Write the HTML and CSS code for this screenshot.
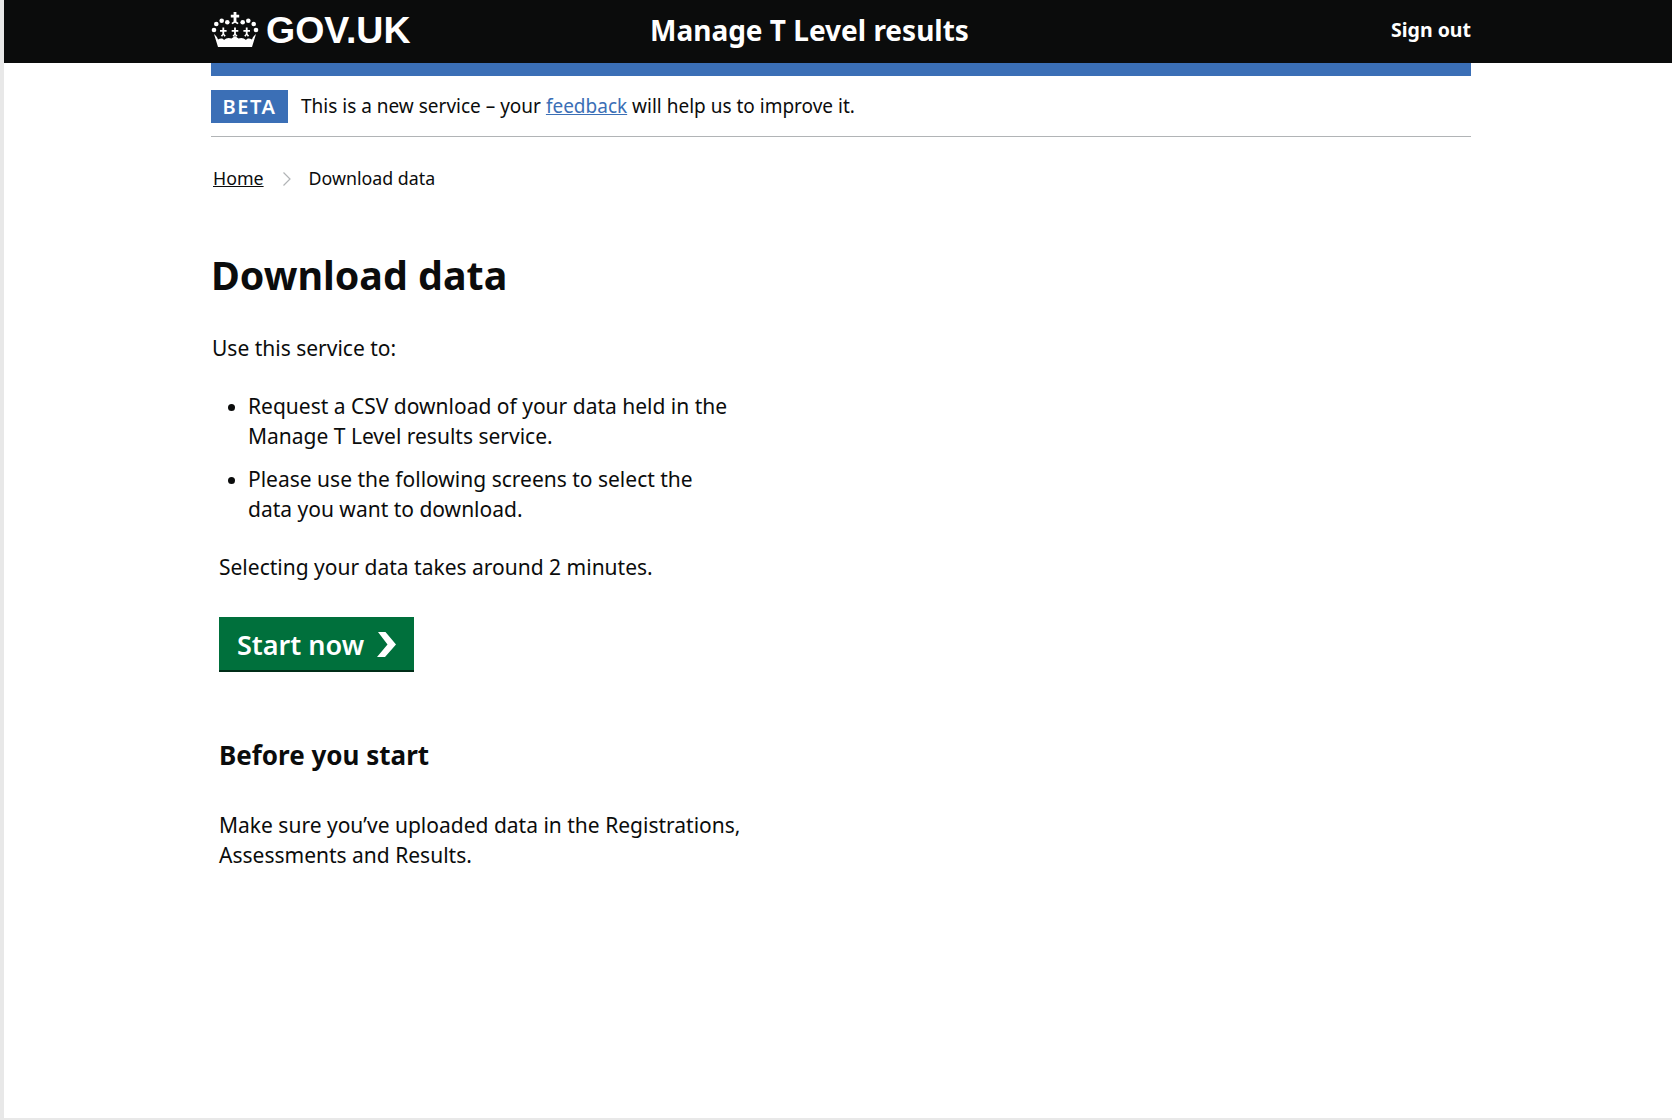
FILE: index.html
```html
<!DOCTYPE html>
<html lang="en">
<head>
    <meta charset="UTF-8">
    <meta name="viewport" content="width=device-width, initial-scale=1.0">
    <title>Download data - Manage T Level results</title>
    <link rel="stylesheet" href="styles.css">
</head>
<body>
    <div class="page">
        <header class="site-header">
            <div class="header-inner">
                <a class="logo" href="#">
                    <svg class="crown" viewBox="0 0 48 36" width="48" height="36" fill="#fff">
                        <path d="M22.600 0h2.800v2.800h2.800v2.800h-2.800v3.800l2.200 1.600-1 1.200-2.600-1.400-2.600 1.400-1-1.200 2.200-1.600V5.600h-2.800V2.800h2.800z"/>
                        <circle cx="3" cy="18" r="2.300"/>
                        <circle cx="5.300" cy="12" r="2.300"/>
                        <circle cx="10.700" cy="8.700" r="2.300"/>
                        <circle cx="16.300" cy="10.300" r="2.300"/>
                        <circle cx="31.700" cy="10.300" r="2.300"/>
                        <circle cx="37.300" cy="8.700" r="2.300"/>
                        <circle cx="42.700" cy="12" r="2.300"/>
                        <circle cx="45" cy="18" r="2.300"/>
                        <path d="M11.400 15.500h1.800v2.400h2.400v1.800h-2.400v2.200l1.600 1.800-1.400 1-1.100-1.600-1.100 1.600-1.400-1 1.600-1.800v-2.200H9v-1.800h2.400z"/>
                        <path d="M23.100 15.500h1.800v2.400h2.400v1.800h-2.400v2.200l1.600 1.800-1.400 1-1.100-1.600-1.100 1.600-1.400-1 1.600-1.800v-2.200h-2.400v-1.800h2.400z"/>
                        <path d="M34.800 15.500h1.800v2.400H39v1.800h-2.400v2.200l1.600 1.800-1.400 1-1.100-1.600-1.100 1.600-1.400-1 1.600-1.800v-2.200h-2.400v-1.800h2.400z"/>
                        <path d="M3 22c2 1.600 3.200 3 4 5.500 2.600-1.500 4.600-1.200 6 .4 2-2 4.800-2.600 7.500-1.400L24 24l3.500 2.500c2.700-1.200 5.500-.6 7.500 1.400 1.400-1.600 3.400-1.900 6-.4.800-2.500 2-3.900 4-5.500L41 35H7z"/>
                    </svg>
                    <span class="logo-text">GOV.UK</span>
                </a>
                <a class="service-name" href="#">Manage T Level results</a>
                <a class="sign-out" href="#">Sign out</a>
            </div>
        </header>

        <div class="container">
            <div class="header-stripe"></div>
            <div class="phase-banner">
                <strong class="phase-tag">BETA</strong>
                <span>This is a new service – your <a class="link" href="#">feedback</a> will help us to improve it.</span>
            </div>

            <nav class="breadcrumbs">
                <a href="#">Home</a>
                <svg class="crumb-sep" viewBox="0 0 10 16" width="10" height="16"><path d="M1.500 1.500 8 8l-6.500 6.500" fill="none" stroke="#b1b4b6" stroke-width="1.200"/></svg>
                <span>Download data</span>
            </nav>

            <main>
                <h1>Download data</h1>
                <p class="intro">Use this service to:</p>
                <ul class="bullets">
                    <li>Request a CSV download of your data held in the Manage T Level results service.</li>
                    <li>Please use the following screens to select the data you want to download.</li>
                </ul>
                <div class="start-block">
                    <p class="time-note">Selecting your data takes around 2 minutes.</p>
                    <a class="start-button" href="#">
                        Start now
                        <svg viewBox="0 0 19 25" width="19" height="25"><path d="M1 0h7.500L19 12.500 8 25H0l10.500-12.500z" fill="#fff"/></svg>
                    </a>
                    <h2>Before you start</h2>
                    <p class="before-note">Make sure you’ve uploaded data in the Registrations, Assessments and Results.</p>
                </div>
            </main>
        </div>
    </div>
</body>
</html>
```

FILE: styles.css
```css
* {
    box-sizing: border-box;
}

body {
    margin: 0;
    padding: 0 0 2px 4px;
    height: 1120px;
    overflow: hidden;
    background-color: #e8e8e8;
    font-family: "Noto Sans", sans-serif;
    font-size: 21px;
    line-height: 30px;
    color: #0b0c0c;
}

.page {
    height: 100%;
    background-color: white;
}

a {
    color: inherit;
}

/* top bar */
.site-header {
    height: 63px;
    background-color: #0b0c0c;
    color: white;
}

.header-inner {
    display: flex;
    align-items: center;
    width: 1260px;
    height: 100%;
    margin-left: 207px;
    padding-bottom: 3px;
}

.header-inner a {
    color: white;
    text-decoration: none;
}

.logo {
    display: flex;
    align-items: center;
    width: 439px;
}

.crown {
    margin-right: 7px;
}

.logo-text {
    font-family: "Liberation Sans", sans-serif;
    font-size: 37.500px;
    font-weight: bold;
}

.service-name {
    flex: 1;
    font-size: 28px;
    font-weight: 700;
}

.sign-out {
    font-size: 19.500px;
    font-weight: 700;
}

.container {
    width: 1260px;
    margin-left: 207px;
}

.header-stripe {
    height: 13px;
    background-color: #3b6fb6;
}

/* beta banner */
.phase-banner {
    display: flex;
    align-items: center;
    gap: 13px;
    height: 61px;
    border-bottom: 1px solid #b1b4b6;
    font-size: 19px;
}

.phase-tag {
    width: 77px;
    height: 33px;
    background-color: #3b6fb6;
    color: white;
    font-size: 20px;
    font-weight: 600;
    line-height: 33px;
    letter-spacing: 1.500px;
    text-align: center;
}

.link {
    color: #3b6fb6;
}

/* breadcrumbs */
.breadcrumbs {
    display: flex;
    align-items: center;
    height: 24px;
    margin-top: 29px;
    padding-left: 2px;
    font-size: 17.800px;
}

.crumb-sep {
    margin: 2px 17px 0 18px;
}

/* main content */
h1 {
    margin: 60px 0 0;
    font-size: 39.400px;
    line-height: 50px;
    font-weight: 700;
}

.intro {
    margin: 33px 0 0 1px;
}

.bullets {
    width: 520px;
    margin: 28px 0 0;
    padding: 0 0 0 37px;
}

.bullets li {
    margin-bottom: 13px;
}

.bullets li::marker {
    font-size: 19px;
}

.start-block {
    margin-left: 8px;
}

.time-note {
    margin: 28px 0 0;
}

.start-button {
    display: inline-flex;
    align-items: center;
    gap: 13px;
    height: 55px;
    margin-top: 35px;
    padding: 0 18px 0 18px;
    background-color: #00703c;
    box-shadow: inset 0 -2px 0 #002d18;
    color: white;
    font-size: 27px;
    font-weight: 600;
    text-decoration: none;
}

h2 {
    margin: 63px 0 0;
    font-size: 26px;
    line-height: 40px;
    font-weight: 700;
}

.before-note {
    width: 530px;
    margin: 35px 0 0;
}
```
